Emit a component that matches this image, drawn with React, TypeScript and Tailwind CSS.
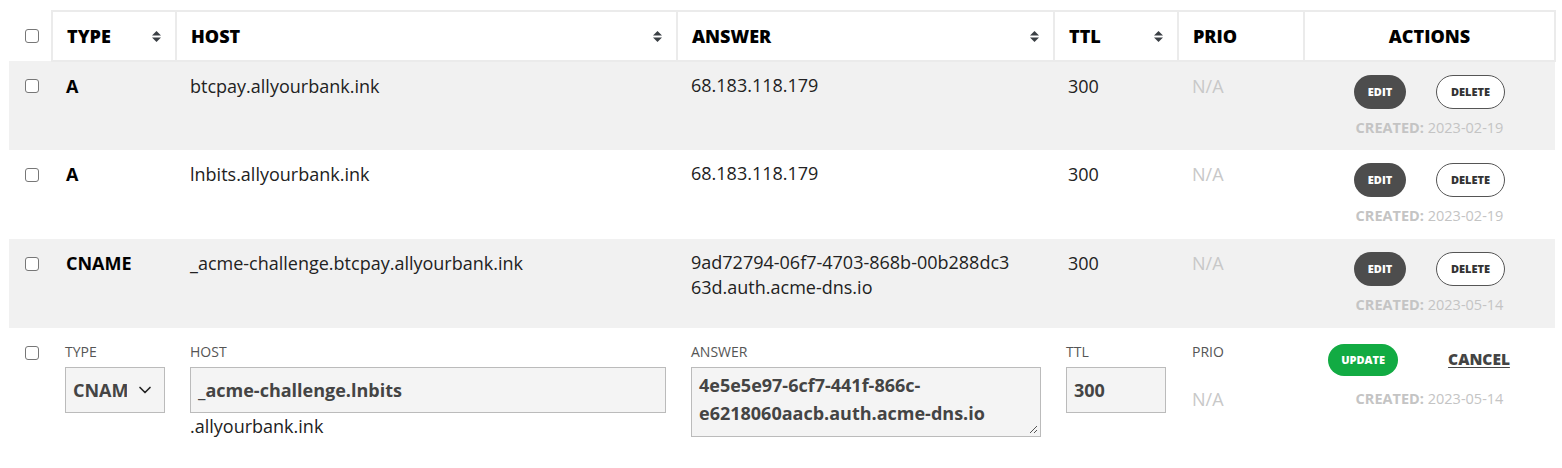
import { ChevronDown } from "lucide-react";

type DnsRecord = {
  type: string;
  host: string;
  answer: string;
  ttl: number;
  created: string;
};

const records: DnsRecord[] = [
  { type: "A", host: "btcpay.allyourbank.ink", answer: "68.183.118.179", ttl: 300, created: "2023-02-19" },
  { type: "A", host: "lnbits.allyourbank.ink", answer: "68.183.118.179", ttl: 300, created: "2023-02-19" },
  {
    type: "CNAME",
    host: "_acme-challenge.btcpay.allyourbank.ink",
    answer: "9ad72794-06f7-4703-868b-00b288dc363d.auth.acme-dns.io",
    ttl: 300,
    created: "2023-05-14",
  },
];

const SortIcon = () => (
  <svg width="9" height="11" viewBox="0 0 9 11" className="shrink-0">
    <path d="M4.5 0 L9 4.6 L0 4.6 Z" fill="#3a3f44" />
    <path d="M4.5 11 L9 6.4 L0 6.4 Z" fill="#3a3f44" />
  </svg>
);

const Checkbox = () => (
  <span className="block w-[14px] h-[14px] rounded-[3px] border border-[#777] bg-white" />
);

const HeaderCell = ({ label, sortable }: { label: string; sortable?: boolean }) => (
  <th className="border-2 border-[#ebebeb] bg-white px-[14px] h-[50px] text-left align-middle">
    <div className="flex items-center justify-between">
      <span className="text-[18px] font-extrabold text-black">{label}</span>
      {sortable && <SortIcon />}
    </div>
  </th>
);

const Created = ({ date }: { date: string }) => (
  <p className="text-[14.5px] text-[#c4c4c4]">
    <span className="font-bold">CREATED:</span> {date}
  </p>
);

const RecordRow = ({ rec, shaded }: { rec: DnsRecord; shaded: boolean }) => (
  <tr className={shaded ? "bg-[#f1f1f1]" : "bg-white"}>
    <td className="h-[89px] align-top pt-[18px] pl-[16px]">
      <Checkbox />
    </td>
    <td className="align-top pt-[11px] px-[14px] text-[18px] font-bold text-black">{rec.type}</td>
    <td className="align-top pt-[11px] px-[14px] text-[18px] text-[#222]">{rec.host}</td>
    <td className="align-top pt-[11px] px-[14px] text-[18px] leading-[25px] text-[#222]">
      <div className="w-[322px] break-all">{rec.answer}</div>
    </td>
    <td className="align-top pt-[11px] px-[14px] text-[18px] text-[#222]">{rec.ttl}</td>
    <td className="align-top pt-[11px] px-[14px] text-[18px] text-[#c8c8c8]">N/A</td>
    <td className="align-top pt-[13px]">
      <div className="flex flex-col items-center">
        <div className="flex gap-[30px]">
          <button className="w-[52px] h-[34px] rounded-full bg-[#4d4d4d] text-white text-[11px] font-extrabold">
            EDIT
          </button>
          <button className="w-[69px] h-[34px] rounded-full bg-white border border-[#555] text-[#333] text-[11px] font-extrabold">
            DELETE
          </button>
        </div>
        <div className="mt-[8px]">
          <Created date={rec.created} />
        </div>
      </div>
    </td>
  </tr>
);

const Label = ({ children }: { children: string }) => (
  <div className="text-[14px] text-[#555] leading-[18px] mb-[6px]">{children}</div>
);

const EditRow = () => (
  <tr className="bg-white">
    <td className="align-top pt-[18px] pl-[16px] h-[121px]">
      <Checkbox />
    </td>
    <td className="align-top pt-[15px] px-[13px]">
      <Label>TYPE</Label>
      <div className="w-[100px] h-[46px] bg-[#f4f4f4] border border-[#bbb] flex items-center pl-[7px] pr-[8px] gap-[8px]">
        <span className="w-[54px] overflow-hidden whitespace-nowrap text-[18px] font-bold text-[#444]">CNAME</span>
        <ChevronDown size={20} strokeWidth={2} className="text-[#222]" />
      </div>
    </td>
    <td className="align-top pt-[15px] px-[14px]">
      <Label>HOST</Label>
      <div className="w-[476px] h-[46px] bg-[#f4f4f4] border border-[#bbb] flex items-center px-[7px] text-[18px] font-bold text-[#444]">
        _acme-challenge.lnbits
      </div>
      <div className="text-[18px] text-[#222] leading-[22px] mt-[2px]">.allyourbank.ink</div>
    </td>
    <td className="align-top pt-[15px] px-[14px]">
      <Label>ANSWER</Label>
      <div className="relative w-[350px] h-[70px] bg-[#f4f4f4] border border-[#bbb] px-[7px] pt-[3px] text-[18px] leading-[28px] font-bold text-[#444]">
        4e5e5e97-6cf7-441f-866c-e6218060aacb.auth.acme-dns.io
        <svg width="10" height="10" viewBox="0 0 10 10" className="absolute right-[2px] bottom-[2px]">
          <path d="M9 2 L2 9 M9 6 L6 9" stroke="#555" strokeWidth="1" />
        </svg>
      </div>
    </td>
    <td className="align-top pt-[15px] px-[12px]">
      <Label>TTL</Label>
      <div className="w-[100px] h-[46px] bg-[#f4f4f4] border border-[#bbb] flex items-center px-[7px] text-[18px] font-bold text-[#444]">
        300
      </div>
    </td>
    <td className="align-top pt-[15px] px-[14px]">
      <Label>PRIO</Label>
      <div className="text-[18px] text-[#c8c8c8] mt-[25px]">N/A</div>
    </td>
    <td className="align-top pt-[16px]">
      <div className="flex flex-col items-center">
        <div className="flex items-center gap-[50px] pr-[21px]">
          <button className="w-[70px] h-[32px] rounded-full bg-[#12ab43] text-white text-[11px] font-extrabold">
            UPDATE
          </button>
          <button className="text-[15.5px] font-extrabold text-[#444] underline underline-offset-2">CANCEL</button>
        </div>
        <div className="mt-[12px]">
          <Created date="2023-05-14" />
        </div>
      </div>
    </td>
  </tr>
);

export default function App() {
  return (
    <div className="w-[1562px] h-[468px] bg-white pl-[9px] pt-[10px] font-['Open_Sans',sans-serif]">
      <table className="w-[1546px] table-fixed border-collapse">
        <colgroup>
          <col className="w-[43px]" />
          <col className="w-[124px]" />
          <col className="w-[501px]" />
          <col className="w-[377px]" />
          <col className="w-[124px]" />
          <col className="w-[126px]" />
          <col className="w-[251px]" />
        </colgroup>
        <thead>
          <tr>
            <th className="pl-[16px] align-middle">
              <Checkbox />
            </th>
            <HeaderCell label="TYPE" sortable />
            <HeaderCell label="HOST" sortable />
            <HeaderCell label="ANSWER" sortable />
            <HeaderCell label="TTL" sortable />
            <HeaderCell label="PRIO" />
            <th className="border-2 border-[#ebebeb] bg-white h-[50px] text-center text-[18px] font-extrabold text-black">
              ACTIONS
            </th>
          </tr>
        </thead>
        <tbody>
          {records.map((rec, i) => (
            <RecordRow key={rec.host} rec={rec} shaded={i % 2 === 0} />
          ))}
          <EditRow />
        </tbody>
      </table>
    </div>
  );
}
